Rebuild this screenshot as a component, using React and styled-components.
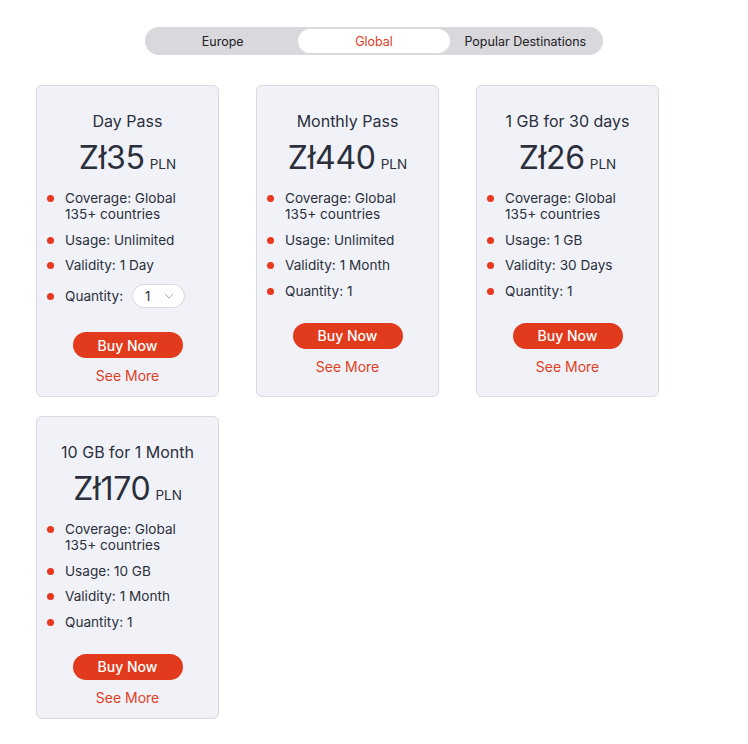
import React, { useState } from "react"
import styled, { createGlobalStyle } from "styled-components"

const GlobalStyle = createGlobalStyle`
  body {
    margin: 0;
    background: #ffffff;
    font-family: Inter, "Noto Sans", sans-serif;
    color: #2a2f3b;
  }
`

const Page = styled.div`
  padding: 27px 0 24px 36px;
`

const TabBar = styled.div`
  display: grid;
  grid-template-columns: repeat(3, 1fr);
  width: 458px;
  height: 28px;
  margin: 0 auto 30px;
  padding: 2px;
  box-sizing: border-box;
  background: #d8d8dd;
  border-radius: 14px;
  transform: translateX(-18px);
`

const Tab = styled.button`
  border: 0;
  border-radius: 12px;
  background: ${(p) => (p.$active ? "#ffffff" : "transparent")};
  color: ${(p) => (p.$active ? "#e0401f" : "#222222")};
  font-family: inherit;
  font-size: 12.5px;
  padding: 0;
  cursor: pointer;
`

const Grid = styled.div`
  display: grid;
  grid-template-columns: repeat(3, 183px);
  column-gap: 37px;
  row-gap: 19px;
`

const Card = styled.div`
  display: flex;
  flex-direction: column;
  align-items: center;
  background: #f1f2f8;
  border: 1px solid #d8dae0;
  border-radius: 6px;
  padding: 25px 10px 12px;
`

const Title = styled.div`
  font-size: 16px;
  line-height: 20px;
`

const Price = styled.div`
  margin-top: 8px;
  font-size: 32px;
  line-height: 38px;
  font-weight: 400;
  letter-spacing: -0.3px;
`

const Unit = styled.span`
  font-size: 13.5px;
  letter-spacing: 0;
  margin-left: 5px;
`

const List = styled.ul`
  align-self: stretch;
  list-style: none;
  margin: 7px 0 0;
  padding: 0;
  display: flex;
  flex-direction: column;
  gap: 9.5px;
`

const Item = styled.li`
  position: relative;
  display: flex;
  align-items: center;
  gap: 9px;
  padding-left: 18px;
  font-size: 13.6px;
  line-height: 16px;

  &::before {
    content: "";
    position: absolute;
    left: 0;
    top: ${(p) => (p.$tall ? "9px" : "5px")};
    width: 7px;
    height: 7px;
    border-radius: 50%;
    background: #e8381d;
  }
`

const Select = styled.div`
  display: flex;
  align-items: center;
  justify-content: space-between;
  width: 53px;
  height: 24px;
  box-sizing: border-box;
  padding: 0 10px 0 12px;
  background: #ffffff;
  border: 1px solid #d6d8de;
  border-radius: 12px;
  font-size: 13px;
`

const BuyButton = styled.button`
  margin-top: 24px;
  width: 110px;
  height: 26px;
  border: 0;
  border-radius: 13px;
  background: #e23a1c;
  color: #ffffff;
  font-family: inherit;
  font-size: 14px;
  font-weight: 500;
  cursor: pointer;
`

const SeeMore = styled.a`
  margin-top: 10px;
  color: #e0401f;
  font-size: 14px;
  line-height: 16px;
  text-decoration: none;
`

const plans = [
  { title: "Day Pass", price: "Zł35", usage: "Unlimited", validity: "1 Day", select: true },
  { title: "Monthly Pass", price: "Zł440", usage: "Unlimited", validity: "1 Month" },
  { title: "1 GB for 30 days", price: "Zł26", usage: "1 GB", validity: "30 Days" },
  { title: "10 GB for 1 Month", price: "Zł170", usage: "10 GB", validity: "1 Month" },
]

const Chevron = () => (
  <svg width="10" height="6" viewBox="0 0 10 6" fill="none">
    <path d="M1 1l4 4 4-4" stroke="#a8abb4" strokeWidth="1" strokeLinecap="round" strokeLinejoin="round" />
  </svg>
)

const App = () => {
  const [tab, setTab] = useState("Global")

  return (
    <Page>
      <GlobalStyle />
      <TabBar>
        {["Europe", "Global", "Popular Destinations"].map((t) => (
          <Tab key={t} $active={tab === t} onClick={() => setTab(t)}>
            {t}
          </Tab>
        ))}
      </TabBar>
      <Grid>
        {plans.map((p) => (
          <Card key={p.title}>
            <Title>{p.title}</Title>
            <Price>
              {p.price}
              <Unit>PLN</Unit>
            </Price>
            <List>
              <Item>
                Coverage: Global
                <br />
                135+ countries
              </Item>
              <Item>Usage: {p.usage}</Item>
              <Item>Validity: {p.validity}</Item>
              {p.select ? (
                <Item $tall style={{ marginTop: 1.5 }}>
                  Quantity:
                  <Select>
                    <span>1</span>
                    <Chevron />
                  </Select>
                </Item>
              ) : (
                <Item>Quantity: 1</Item>
              )}
            </List>
            <BuyButton>Buy Now</BuyButton>
            <SeeMore href="#">See More</SeeMore>
          </Card>
        ))}
      </Grid>
    </Page>
  )
}

export default App
